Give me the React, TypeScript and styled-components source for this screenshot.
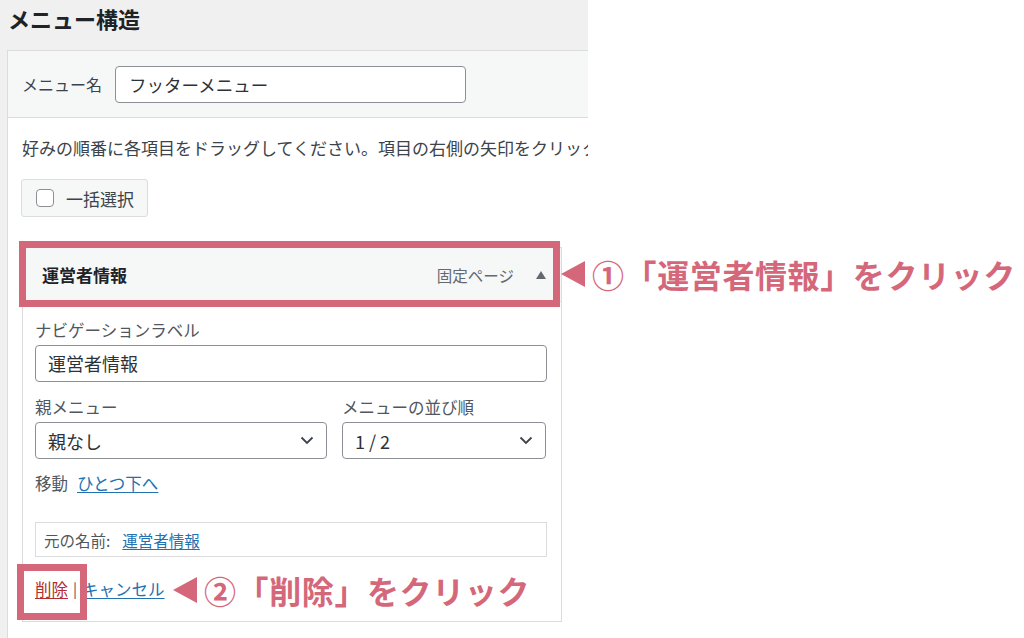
import styled, { createGlobalStyle } from 'styled-components';

const GlobalStyle = createGlobalStyle`
  html, body {
    margin: 0;
    padding: 0;
    background: #fff;
  }
  body {
    font-family: 'Noto Sans CJK JP', 'Noto Sans', sans-serif;
    color: #1d2327;
  }
`;

const PINK = '#d4687a';

export default function App() {
  return (
    <Page>
      <GlobalStyle />
      <Screen>
        <Title>メニュー構造</Title>
        <Panel>
          <PanelHeader>
            <FieldLabel>メニュー名</FieldLabel>
            <NameInput>フッターメニュー</NameInput>
          </PanelHeader>
          <PanelBody>
            <Description>好みの順番に各項目をドラッグしてください。項目の右側の矢印をクリック</Description>
            <BulkButton>
              <CheckBox />
              一括選択
            </BulkButton>

            <MenuItem>
              <ItemBar>
                <ItemTitle>運営者情報</ItemTitle>
                <ItemControls>
                  <ItemType>固定ページ</ItemType>
                  <ToggleArrow />
                </ItemControls>
              </ItemBar>
              <ItemSettings>
                <FieldGroup>
                  <SmallLabel>ナビゲーションラベル</SmallLabel>
                  <TextBox>運営者情報</TextBox>
                </FieldGroup>
                <SelectRow>
                  <FieldGroup>
                    <SmallLabel>親メニュー</SmallLabel>
                    <SelectBox>
                      親なし
                      <Chevron />
                    </SelectBox>
                  </FieldGroup>
                  <FieldGroup>
                    <SmallLabel>メニューの並び順</SmallLabel>
                    <SelectBox>
                      1 / 2
                      <Chevron />
                    </SelectBox>
                  </FieldGroup>
                </SelectRow>
                <MoveRow>
                  移動
                  <Link>ひとつ下へ</Link>
                </MoveRow>
                <OriginalBox>
                  元の名前:
                  <Link>運営者情報</Link>
                </OriginalBox>
                <ActionRow>
                  <DeleteLink>削除</DeleteLink>
                  <Sep>|</Sep>
                  <Link>キャンセル</Link>
                </ActionRow>
              </ItemSettings>
            </MenuItem>
          </PanelBody>
        </Panel>
      </Screen>

      <Highlight $left={19} $top={241} $w={541} $h={66} />
      <Highlight $left={17} $top={564} $w={70} $h={56} />

      <Callout $left={561} $top={258}>
        <Pointer />
        <CalloutText>①「運営者情報」をクリック</CalloutText>
      </Callout>
      <Callout $left={173} $top={574}>
        <Pointer />
        <CalloutText>②「削除」をクリック</CalloutText>
      </Callout>
    </Page>
  );
}

function Chevron() {
  return (
    <ChevronSvg width="14" height="9" viewBox="0 0 14 9">
      <path d="M1.5 1.5 L7 7 L12.5 1.5" fill="none" stroke="#3c434a" strokeWidth="1.8" />
    </ChevronSvg>
  );
}

const Page = styled.div`
  position: relative;
  width: 1024px;
  height: 638px;
  overflow: hidden;
  background: #fff;
`;

const Screen = styled.div`
  width: 588px;
  height: 100%;
  overflow: hidden;
  background: #f0f0f1;
`;

const Title = styled.h2`
  margin: 0;
  padding: 0 8px;
  height: 36px;
  line-height: 36px;
  font-size: 22px;
  font-weight: 700;
  color: #1d2327;
  white-space: nowrap;
`;

const Panel = styled.div`
  margin: 14px 0 0 7px;
  width: 640px;
  border: 1px solid #dcdcde;
  background: #fff;
  height: 640px;
`;

const PanelHeader = styled.div`
  display: flex;
  align-items: center;
  gap: 13px;
  height: 66px;
  padding: 0 14px;
  background: #f6f7f7;
  border-bottom: 1px solid #dcdcde;
`;

const FieldLabel = styled.span`
  font-size: 16px;
  color: #3c434a;
`;

const NameInput = styled.div`
  box-sizing: border-box;
  width: 351px;
  height: 37px;
  line-height: 35px;
  padding: 0 13px;
  border: 1px solid #8c8f94;
  border-radius: 4px;
  background: #fff;
  font-size: 17.5px;
  color: #2c3338;
`;

const PanelBody = styled.div`
  padding: 18px 0 0 14px;
`;

const Description = styled.p`
  margin: 0;
  line-height: 24px;
  font-size: 17px;
  color: #3c434a;
  white-space: nowrap;
`;

const BulkButton = styled.div`
  box-sizing: border-box;
  display: flex;
  align-items: center;
  gap: 12px;
  margin: 19px 0 0 -1px;
  width: 127px;
  height: 38px;
  padding-left: 14px;
  background: #f6f7f7;
  border: 1px solid #dcdcde;
  border-radius: 3px;
  font-size: 17px;
  color: #3c434a;
`;

const CheckBox = styled.span`
  box-sizing: border-box;
  width: 18px;
  height: 18px;
  border: 1px solid #8c8f94;
  border-radius: 4px;
  background: #fff;
`;

const MenuItem = styled.div`
  margin-top: 30px;
  width: 540px;
`;

const ItemBar = styled.div`
  box-sizing: border-box;
  display: flex;
  align-items: center;
  justify-content: space-between;
  height: 55px;
  padding: 0 15px 0 19px;
  background: #f6f7f7;
  border: 1px solid #dcdcde;
`;

const ItemTitle = styled.span`
  font-size: 17px;
  font-weight: 700;
  color: #1d2327;
`;

const ItemControls = styled.div`
  display: flex;
  align-items: center;
  gap: 22px;
`;

const ItemType = styled.span`
  font-size: 15.5px;
  color: #646970;
`;

const ToggleArrow = styled.span`
  width: 0;
  height: 0;
  border-left: 5px solid transparent;
  border-right: 5px solid transparent;
  border-bottom: 8px solid #646970;
`;

const ItemSettings = styled.div`
  box-sizing: border-box;
  padding: 18px 14px 21px 12px;
  border: 1px solid #dcdcde;
  border-top: none;
  background: #fff;
`;

const FieldGroup = styled.div`
  display: flex;
  flex-direction: column;
  gap: 5px;
`;

const SmallLabel = styled.span`
  line-height: 20px;
  font-size: 16.5px;
  color: #50575e;
`;

const TextBox = styled.div`
  box-sizing: border-box;
  height: 37px;
  line-height: 35px;
  padding: 0 12px;
  border: 1px solid #8c8f94;
  border-radius: 4px;
  font-size: 18px;
  color: #2c3338;
`;

const SelectRow = styled.div`
  display: grid;
  grid-template-columns: 292px 204px;
  gap: 15px;
  margin-top: 15px;
`;

const SelectBox = styled.div`
  box-sizing: border-box;
  display: flex;
  align-items: center;
  justify-content: space-between;
  height: 37px;
  padding: 0 12px 0 12px;
  border: 1px solid #8c8f94;
  border-radius: 4px;
  font-size: 18px;
  color: #2c3338;
`;

const ChevronSvg = styled.svg`
  display: block;
`;

const MoveRow = styled.div`
  display: flex;
  gap: 9px;
  margin-top: 13px;
  line-height: 22px;
  font-size: 16.5px;
  color: #50575e;
`;

const Link = styled.a`
  color: #2271b1;
  text-decoration: underline;
  text-underline-offset: 2px;
`;

const OriginalBox = styled.div`
  box-sizing: border-box;
  display: flex;
  align-items: center;
  gap: 12px;
  margin-top: 28px;
  height: 35px;
  padding: 0 8px;
  border: 1px solid #dcdcde;
  font-size: 15.5px;
  color: #50575e;
`;

const ActionRow = styled.div`
  display: flex;
  align-items: center;
  gap: 5px;
  margin-top: 21px;
  line-height: 22px;
  font-size: 16.5px;
`;

const DeleteLink = styled.a`
  color: #b32d2e;
  text-decoration: underline;
  text-underline-offset: 2px;
`;

const Sep = styled.span`
  color: #50575e;
  font-size: 15px;
`;

const Highlight = styled.div<{ $left: number; $top: number; $w: number; $h: number }>`
  position: absolute;
  box-sizing: border-box;
  left: ${(p) => p.$left}px;
  top: ${(p) => p.$top}px;
  width: ${(p) => p.$w}px;
  height: ${(p) => p.$h}px;
  border: 7px solid ${PINK};
`;

const Callout = styled.div<{ $left: number; $top: number }>`
  position: absolute;
  left: ${(p) => p.$left}px;
  top: ${(p) => p.$top}px;
  display: flex;
  align-items: center;
  gap: 7px;
  height: 32px;
`;

const Pointer = styled.span`
  width: 0;
  height: 0;
  border-top: 13px solid transparent;
  border-bottom: 13px solid transparent;
  border-right: 24px solid ${PINK};
`;

const CalloutText = styled.span`
  font-size: 32px;
  line-height: 32px;
  font-weight: 700;
  letter-spacing: 0.6px;
  color: ${PINK};
  white-space: nowrap;
`;
